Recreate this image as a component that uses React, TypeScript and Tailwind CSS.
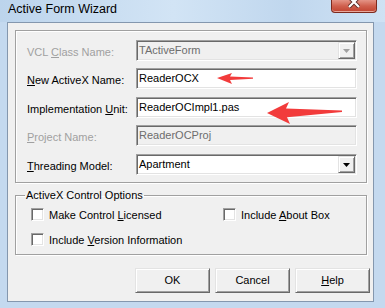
import React from 'react';

const sunken =
  'border border-t-[#a0a0a0] border-l-[#a0a0a0] border-b-white border-r-white shadow-[inset_1px_1px_0_#696969,inset_-1px_-1px_0_#e3e3e3]';
const raised =
  'border border-t-[#e3e3e3] border-l-[#e3e3e3] border-b-[#696969] border-r-[#696969] shadow-[inset_1px_1px_0_#ffffff,inset_-1px_-1px_0_#a0a0a0]';
const etched = 'border border-[#a0a0a0] shadow-[1px_1px_0_#ffffff,inset_1px_1px_0_#ffffff]';

const Arrow: React.FC<{ disabled?: boolean }> = ({ disabled }) => (
  <svg width="7" height="4" viewBox="0 0 7 4">
    <polygon points="0,0 7,0 3.5,4" fill={disabled ? '#a0a0a0' : '#000'} />
  </svg>
);

const Combo: React.FC<{ value: string; disabled?: boolean }> = ({ value, disabled }) => (
  <div className={`flex h-[21px] w-[221px] items-center ${sunken} ${disabled ? 'bg-[#f0f0f0] text-[#6d6d6d]' : 'bg-white text-black'}`}>
    <span className="flex-1 pl-[2px]">{value}</span>
    <div className={`mr-[1px] flex h-[17px] w-[17px] items-center justify-center bg-[#f0f0f0] ${raised}`}>
      <Arrow disabled={disabled} />
    </div>
  </div>
);

const Edit: React.FC<{ value: string; disabled?: boolean }> = ({ value, disabled }) => (
  <div className={`flex h-[21px] w-[221px] items-center pl-[2px] ${sunken} ${disabled ? 'bg-[#f0f0f0] text-[#6d6d6d]' : 'bg-white text-black'}`}>
    {value}
  </div>
);

const Row: React.FC<{ label: React.ReactNode; disabled?: boolean; children: React.ReactNode; className?: string }> = ({
  label,
  disabled,
  children,
  className = '',
}) => (
  <div className={`flex items-center ${className}`}>
    <div className={`w-[109px] pt-[3px] ${disabled ? 'text-[#a0a0a0]' : 'text-black'}`}>{label}</div>
    {children}
  </div>
);

const Check: React.FC<{ children: React.ReactNode }> = ({ children }) => (
  <div className="flex h-[13px] items-center gap-[5px]">
    <div className={`h-[13px] w-[13px] bg-white ${sunken}`} />
    <span className="pt-[1px]">{children}</span>
  </div>
);

const Button: React.FC<{ children: React.ReactNode }> = ({ children }) => (
  <div className={`flex h-[25px] w-[75px] items-center justify-center bg-[#f0f0f0] ${raised}`}>{children}</div>
);

export default function App() {
  return (
    <div className="relative flex h-[308px] w-[385px] flex-col overflow-hidden bg-[#c4d9ef] font-['Liberation_Sans',Arial,sans-serif] text-[11px] leading-[13px] text-black">
      {/* title bar */}
      <div className="flex h-[22px] items-start justify-between bg-[linear-gradient(90deg,#bcd4ec_0%,#d2e4f5_45%,#c0d7ee_75%,#cfe2f4_100%)]">
        <span className="pl-[8px] pt-[2px] text-[12.5px] leading-[15px] text-black">Active Form Wizard</span>
        <div className="mr-[8px] flex h-[13px] w-[46px] items-start justify-center rounded-b-[4px] border border-t-0 border-[#7d2a1e] bg-[linear-gradient(180deg,#e49486_0%,#d0604e_50%,#c14330_100%)] shadow-[inset_0_-1px_0_#e8a89c]">
          <svg width="12" height="9" viewBox="0 0 12 9" className="-mt-[1px]">
            <path d="M1 -2 L11 8 M11 -2 L1 8" stroke="#5a2a24" strokeWidth="4" />
            <path d="M1 -2 L11 8 M11 -2 L1 8" stroke="#ffffff" strokeWidth="2.2" />
          </svg>
        </div>
      </div>

      {/* client */}
      <div className="ml-[7px] flex h-[280px] w-[367px] flex-col border border-[#8497ae] bg-[#f0f0f0]">
        <div className={`ml-[7px] mt-[7px] flex h-[153px] w-[352px] flex-col pl-[11px] pt-[9px] ${etched}`}>
          <Row
            disabled
            label={
              <>
                VCL <u>C</u>lass Name:
              </>
            }
          >
            <Combo value="TActiveForm" disabled />
          </Row>
          <Row
            className="mt-[7px]"
            label={
              <>
                <u>N</u>ew ActiveX Name:
              </>
            }
          >
            <Edit value="ReaderOCX" />
          </Row>
          <Row
            className="mt-[8px]"
            label={
              <>
                Implementation <u>U</u>nit:
              </>
            }
          >
            <Edit value="ReaderOCImpl1.pas" />
          </Row>
          <Row
            className="mt-[7px]"
            disabled
            label={
              <>
                <u>P</u>roject Name:
              </>
            }
          >
            <Edit value="ReaderOCProj" disabled />
          </Row>
          <Row
            className="mt-[8px]"
            label={
              <>
                <u>T</u>hreading Model:
              </>
            }
          >
            <Combo value="Apartment" />
          </Row>
        </div>

        <fieldset className={`ml-[7px] mt-[6px] h-[66px] w-[352px] ${etched}`}>
          <legend className="ml-[9px] px-[1px] leading-[13px]">ActiveX Control Options</legend>
          <div className="grid grid-cols-[192px_1fr] gap-y-[12px] pl-[15px] pt-[6px]">
            <Check>
              Make Control <u>L</u>icensed
            </Check>
            <Check>
              Include <u>A</u>bout Box
            </Check>
            <Check>
              Include <u>V</u>ersion Information
            </Check>
          </div>
        </fieldset>

        <div className="ml-[127px] mt-[13px] flex gap-[5px]">
          <Button>OK</Button>
          <Button>Cancel</Button>
          <Button>
            <span>
              <u>H</u>elp
            </span>
          </Button>
        </div>
      </div>

      {/* red annotation arrows */}
      <svg className="pointer-events-none absolute left-0 top-0" width="385" height="308" viewBox="0 0 385 308">
        <polygon points="217,78 232,73 230,76.6 253,77.4 253,78.8 230,80 232,84" fill="#f23b3b" />
        <polygon points="267,113 289,102 286,108.6 342,110.4 342,112 287,117.2 290,124" fill="#f23b3b" />
      </svg>
    </div>
  );
}
